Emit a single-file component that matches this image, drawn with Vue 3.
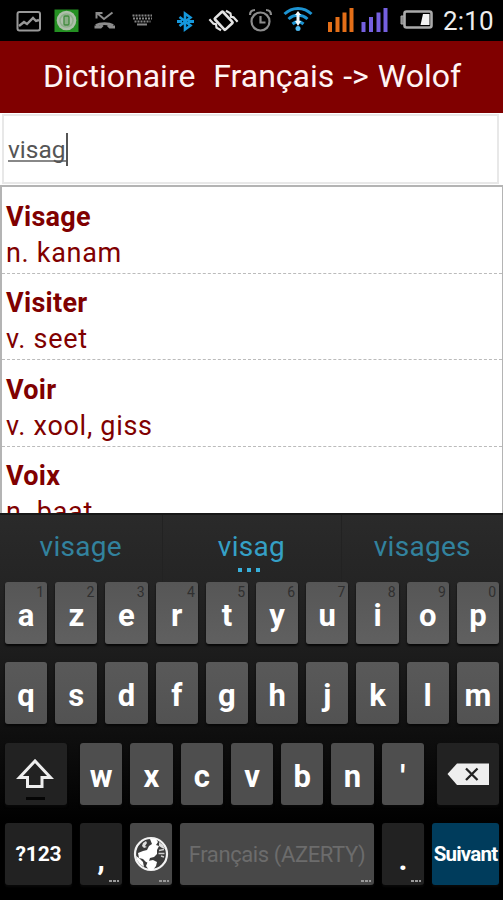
<script setup>
import { ref } from "vue";

const search = ref("visag");

// liste des mots
const words = [
  { fr: "Visage", wo: "n. kanam" },
  { fr: "Visiter", wo: "v. seet" },
  { fr: "Voir", wo: "v. xool, giss" },
  { fr: "Voix", wo: "n. baat" },
];

const suggestions = ["visage", "visag", "visages"];

// clavier azerty
const row1 = "azertyuiop".split("");
const row2 = "qsdfghjklm".split("");
const row3 = "wxcvbn'".split("");

function press(key) {
  search.value += key;
}
</script>

<template>
  <div class="phone">
    <div class="status">
      <svg width="503" height="41" viewBox="0 0 503 41">
        <!-- image -->
        <g fill="none" stroke="#999" stroke-width="2">
          <rect x="17.500" y="12" width="22.500" height="18.500" rx="2" />
          <path d="M19 26l5-4 3 2 6-6 3 3 3-1" stroke-width="2.400" />
        </g>
        <!-- app verte -->
        <rect x="54.500" y="9.500" width="24" height="22.500" fill="#249022" />
        <circle cx="66.500" cy="20.500" r="9.800" fill="#aebfaa" />
        <circle cx="66.500" cy="20.500" r="6.500" fill="none" stroke="#8fae8b" stroke-width="1.500" />
        <rect x="64" y="16" width="5" height="9" rx="1" fill="#8caf87" stroke="#3f8a3c" stroke-width="1.300" />
        <!-- appel manqué -->
        <g fill="none" stroke="#8c8c8c" stroke-width="2">
          <path d="M96.500 18.500v-5.500h6M97 13l7 6 8.500-6.500" />
          <path d="M96 25.500c4-2.500 13-2.500 17 0" stroke-width="2.800" />
          <path d="M94.500 27h6l2-2M108 25l2 2h5" stroke-width="3" />
        </g>
        <!-- clavier -->
        <g stroke="#858585" fill="none">
          <path d="M132.500 15.500h19.500M133 18.500h19M134.500 21.500h16" stroke-width="2" stroke-dasharray="2 1" />
          <path d="M137 24.500h10" stroke-width="2" />
        </g>
        <!-- bluetooth -->
        <path d="M179.500 17l11 8.500-5.500 4V13.500l5.500 4-11 8.500" fill="none" stroke="#1598dc" stroke-width="2.600" />
        <path d="M177 21.500h5M188 21.500h6" stroke="#1598dc" stroke-width="3" />
        <!-- vibreur -->
        <g transform="rotate(-43 223.500 20.500)" fill="none" stroke="#e4e4e4">
          <rect x="218" y="13" width="11" height="15.500" rx="1" stroke-width="2.600" />
          <path d="M214 10v6l1.500 2-2 3 1.500 5M233 31v-6l-1.500-2 2-3-1.500-5" stroke-width="2.200" />
        </g>
        <!-- alarme -->
        <g fill="none" stroke="#8c8c8c" stroke-width="2.200">
          <circle cx="260.500" cy="21.500" r="9" />
          <path d="M260.500 16v6.500h5M250 15c0-3 2-5 5-5M271 15c0-3-2-5-5-5" />
        </g>
        <!-- wifi -->
        <g fill="none" stroke="#1d94d2" stroke-width="3">
          <path d="M284.500 14c7.500-7.500 19.500-7.500 27 0M288.500 19c5.500-5 13.500-5 19 0M292.500 24c3.500-3 7.500-3 11 0" />
        </g>
        <circle cx="298" cy="28.500" r="2.500" fill="#4ebaf0" />
        <path d="M298 11l3 4h-1.500v6h1.500l-3 5-3-5h1.500v-6h-1.500z" fill="#f2f8fb" />
        <!-- réseaux -->
        <path d="M328 22h4v10h-4zM335.500 17h4v15h-4zM342.500 12.500h4v19.500h-4zM349.500 8h4v24h-4z" fill="#e46f18" />
        <path d="M361.500 22h4v10h-4zM369 17h4v15h-4zM376.500 12.500h4v19.500h-4zM383.500 8h4v24h-4z" fill="#7560e0" />
        <!-- batterie -->
        <rect x="404.500" y="11.500" width="27" height="16" rx="2" fill="#000" stroke="#aaa" stroke-width="2.600" />
        <path d="M401 16h3v8h-3z" fill="#888" stroke="#aaa" />
        <path d="M423 14h6.500v11h-9z" fill="#f4f4f4" />
      </svg>
      <span class="clock">2:10</span>
    </div>

    <header class="title"><span>Dictionaire&nbsp; Français -&gt; Wolof</span></header>

    <div class="search">
      <div class="field"><span class="typed">{{ search }}</span><i class="caret"></i></div>
    </div>

    <ul class="list">
      <li v-for="word in words" :key="word.fr">
        <b>{{ word.fr }}</b>
        <p>{{ word.wo }}</p>
      </li>
    </ul>

    <div class="keyboard">
      <div class="suggest">
        <div v-for="(s, i) in suggestions" :key="s" :class="{ current: i === 1 }">
          <span>{{ s }}</span>
        </div>
      </div>

      <div class="row">
        <div v-for="(k, i) in row1" :key="k" class="key" @click="press(k)">
          {{ k }}<sup>{{ (i + 1) % 10 }}</sup>
        </div>
      </div>

      <div class="row">
        <div v-for="k in row2" :key="k" class="key" @click="press(k)">{{ k }}</div>
      </div>

      <div class="row row3">
        <div class="key dark wide">
          <svg width="62" height="62" viewBox="0 0 62 62">
            <path d="M30 18L14.500 34.500H22.500v9h14.500v-9h8.500z" fill="none" stroke="#eee" stroke-width="3" />
            <path d="M21 55.500h19" stroke="#050505" stroke-width="3" />
          </svg>
        </div>
        <div class="letters">
          <div v-for="k in row3" :key="k" class="key" @click="press(k)">{{ k }}</div>
        </div>
        <div class="key dark wide">
          <svg width="62" height="62" viewBox="0 0 62 62">
            <path d="M10.500 31L20 20.500h32v21.500H20z" fill="#eee" />
            <path d="M29 25.500l11.500 11.500M40.500 25.500L29 37" stroke="#222" stroke-width="2.300" />
          </svg>
        </div>
      </div>

      <div class="row row4">
        <div class="key dark num">?123</div>
        <div class="key dark punct" @click="press(',')">,<em></em></div>
        <div class="key low">
          <svg width="36" height="36" viewBox="0 0 36 36">
            <circle cx="18" cy="18" r="16" fill="#3a3a3a" stroke="#f2f2f2" stroke-width="2.200" />
            <!-- continents -->
            <path
              d="M17 3l6 0 2 3-2 3 3 1-2 4 0 4-3 3-4 1-1 3 3 1-1 2-5-2-3-3-4-1-1-5 5-2 4-1 2-4 3-2z"
              fill="#fff"
            />
            <path d="M15 25l5-1 4 2-1 4-3 4-4 0-3-4z" fill="#fff" />
            <path d="M3 20l3 2 4 4 1 5-4-3-3-4z" fill="#fff" />
            <path d="M10 7l3-2 1 2-2 3 2 1-3 1-2-2zM26 6l4 3 2 4-3-1-3-2z" fill="#ddd" />
            <path d="M26 14.500l5-1M25.500 17.500h6M28 20l3 1" stroke="#ccc" stroke-width="1.400" fill="none" />
          </svg>
          <em></em>
        </div>
        <div class="key low space" @click="press(' ')">Français (AZERTY)<em></em></div>
        <div class="key dark punct" @click="press('.')">.<em></em></div>
        <div class="key next">Suivant</div>
      </div>
    </div>
  </div>
</template>

<style>
body {
  margin: 0;
  background: #fff;
}
</style>

<style scoped>
.phone {
  width: 503px;
  height: 900px;
  overflow: hidden;
  display: flex;
  flex-direction: column;
  font-family: Roboto, "Liberation Sans", sans-serif;
}

/* barre de statut */
.status {
  position: relative;
  height: 41px;
  flex: none;
  background: #000;
}
.status svg {
  display: block;
}
.clock {
  position: absolute;
  top: 4px;
  left: 443px;
  line-height: 34px;
  font-size: 26px;
  letter-spacing: 0.2px;
  color: #eee;
}

.title {
  flex: none;
  height: 72px;
  line-height: 70px;
  box-sizing: border-box;
  padding-left: 43px;
  background: #800000;
  color: #fff4f4;
  font-size: 32px;
  word-spacing: 1px;
  white-space: nowrap;
}

/* recherche */
.search {
  flex: none;
  height: 72px;
  box-sizing: border-box;
  padding: 1px 4px 1px 2px;
}
.field {
  height: 70px;
  box-sizing: border-box;
  border: 2px solid #e8e8e8;
  padding-left: 4px;
  display: flex;
  align-items: center;
  font-size: 24.500px;
  color: #555;
}
.typed {
  line-height: 27px;
  height: 26px;
  box-sizing: border-box;
  border-bottom: 2px solid #888;
}
.caret {
  width: 2px;
  height: 33px;
  background: #555;
}

/* résultats */
.list {
  flex: none;
  height: 328px;
  box-sizing: border-box;
  margin: 0;
  padding: 0;
  list-style: none;
  overflow: hidden;
  border: 2px solid #b4b4b4;
  border-right-width: 1px;
  border-bottom: 0;
  color: #800000;
}
.list li {
  height: 86.400px;
  box-sizing: border-box;
  padding: 11.200px 5px 0 4px;
  border-bottom: 1px dashed #bbb;
  font-size: 27px;
  line-height: 36px;
}
.list li:first-child {
  height: 87px;
  padding-top: 12px;
}
.list b {
  display: block;
  letter-spacing: 0.3px;
}
.list p {
  margin: 0;
  letter-spacing: 0.7px;
}

/* clavier */
.keyboard {
  flex: none;
  height: 387px;
  box-sizing: border-box;
  border-top: 2px solid #181818;
  background: linear-gradient(#2a2a2a 0, #252525 60px, #1c1c1c 140px, #101010 210px, #000 310px);
}
.suggest {
  height: 67px;
  display: flex;
}
.suggest div {
  position: relative;
  flex: 1;
  line-height: 64px;
  text-align: center;
  font-size: 28px;
  letter-spacing: 0.3px;
  color: #32829e;
}
.suggest div + div {
  border-left: 1px solid #222;
}
.suggest .current {
  flex: 0 0 178px;
  color: #35a0c6;
}
.current::after {
  content: "";
  position: absolute;
  left: 75px;
  top: 53px;
  width: 24px;
  height: 4px;
  background: repeating-linear-gradient(90deg, #38b0dc 0 4px, transparent 4px 9px);
}
.row {
  display: grid;
  grid-template-columns: repeat(10, 1fr);
  gap: 8px;
  padding: 0 4px 0 5px;
  height: 62px;
  margin-bottom: 18.400px;
}
.key {
  position: relative;
  display: flex;
  align-items: center;
  justify-content: center;
  height: 62px;
  box-sizing: border-box;
  padding-top: 5px;
  border-radius: 3px;
  background: linear-gradient(#565656, #606060);
  box-shadow: 0 2px 2px #080808;
  color: #fff;
  font-size: 31px;
  font-weight: bold;
}
.row + .row .key {
  background: linear-gradient(#595959, #525252);
}
.key sup {
  position: absolute;
  right: 3px;
  top: 2px;
  line-height: 16px;
  font-size: 14px;
  font-weight: normal;
  color: #303030;
}
.row3 {
  grid-template-columns: 62px 1fr 62px;
  gap: 13px;
}
.letters {
  display: grid;
  grid-template-columns: repeat(7, 1fr);
  gap: 8px;
}
.row.row3 .letters .key {
  background: #4e4e4e;
}
.row .wide {
  padding: 0;
}
.row4 {
  grid-template-columns: 67px 42px 42px 1fr 42px 67px;
  margin-bottom: 0;
}
.row4 .key {
  padding: 0;
}
.row + .row .key.dark {
  background: #222;
}
.row + .row .key.low {
  background: #484848;
}
.row .key.space {
  font-size: 22px;
  font-weight: normal;
  letter-spacing: -0.4px;
  color: #6c6c6c;
}
.row .key.num {
  font-size: 21px;
  letter-spacing: -0.2px;
}
.row .key.punct {
  padding-top: 10px;
}
.row + .row .key.next {
  background: #003c5c;
  font-size: 20.500px;
  letter-spacing: -0.8px;
  white-space: nowrap;
}
.key em {
  position: absolute;
  right: 3px;
  bottom: 3px;
  width: 10px;
  height: 2px;
  background: repeating-linear-gradient(90deg, #999 0 3px, transparent 3px 4px);
}
</style>
